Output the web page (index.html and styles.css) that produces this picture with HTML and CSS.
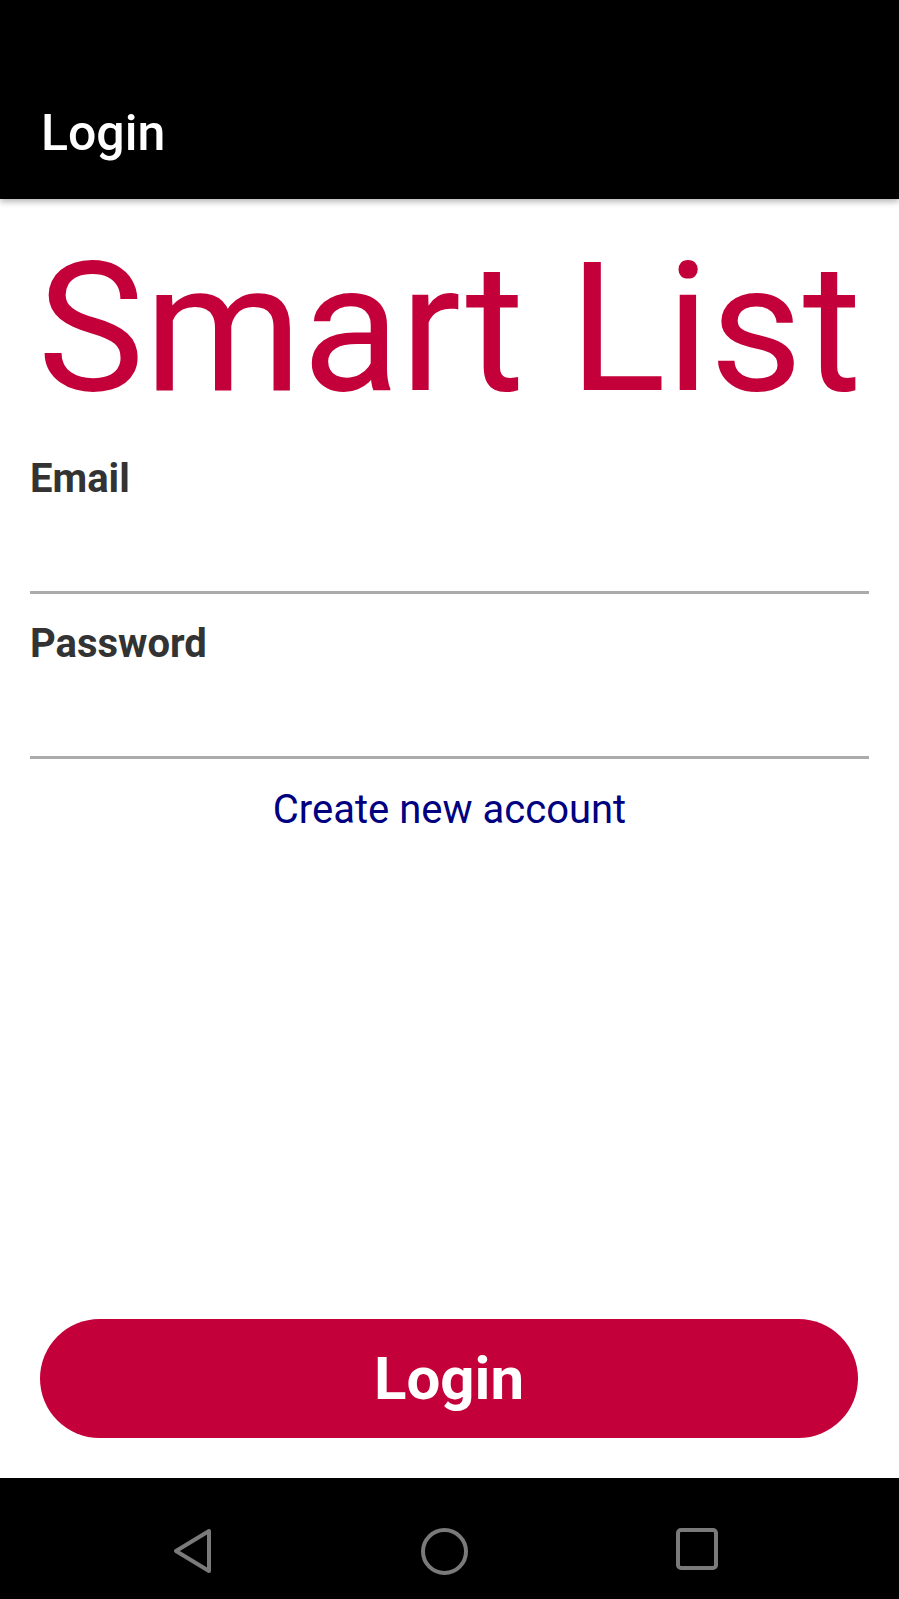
FILE: index.html
```html
<!DOCTYPE html>
<html lang="en">
<head>
<meta charset="utf-8">
<title>Login</title>
<link rel="stylesheet" href="styles.css">
</head>
<body>
<div class="screen">
  <header class="appbar">
    <h1 class="appbar-title">Login</h1>
  </header>
  <main class="content">
    <div class="brand">Smart List</div>
    <form class="form">
      <label class="field">
        <span class="field-label">Email</span>
        <span class="field-input"></span>
      </label>
      <label class="field field-second">
        <span class="field-label">Password</span>
        <span class="field-input"></span>
      </label>
      <a class="link" href="#">Create new account</a>
    </form>
    <div class="spacer"></div>
    <button class="btn" type="button">Login</button>
  </main>
  <nav class="navbar">
    <svg class="nav-icon" width="40" height="46" viewBox="0 0 40 46">
      <path d="M36 3 L36 43 L3 23 Z" fill="none" stroke="#7a7a7a" stroke-width="4" stroke-linejoin="round"/>
    </svg>
    <svg class="nav-icon" width="47" height="47" viewBox="0 0 47 47">
      <circle cx="23.5" cy="23.5" r="21.5" fill="none" stroke="#7a7a7a" stroke-width="4"/>
    </svg>
    <svg class="nav-icon" width="42" height="42" viewBox="0 0 42 42">
      <rect x="2" y="2" width="38" height="38" rx="3" fill="none" stroke="#7a7a7a" stroke-width="4"/>
    </svg>
  </nav>
</div>
</body>
</html>
```

FILE: styles.css
```css
* { box-sizing: border-box; }
html, body { margin: 0; padding: 0; background: #fff; }
body { font-family: Roboto, "Noto Sans", sans-serif; }

.screen {
  width: 899px;
  height: 1599px;
  display: flex;
  flex-direction: column;
  overflow: hidden;
}

.appbar {
  height: 199px;
  flex: none;
  background: #000;
  display: flex;
  align-items: flex-end;
  padding: 0 0 41px 41px;
  box-shadow: 0 3px 6px rgba(0,0,0,0.28);
  position: relative;
  z-index: 1;
}
.appbar-title {
  margin: 0;
  color: #fff;
  font-size: 50px;
  line-height: 50px;
  font-weight: 500;
}

.content {
  flex: 1;
  display: flex;
  flex-direction: column;
}

.brand {
  margin-top: 40px;
  text-align: center;
  color: #c4003a;
  font-size: 180px;
  line-height: 180px;
  font-weight: 400;
  letter-spacing: 0;
}

.form {
  margin: 40px 30px 0 30px;
  display: flex;
  flex-direction: column;
}
.field { display: flex; flex-direction: column; }
.field-second { margin-top: 30px; }
.field-label {
  color: #333;
  font-size: 40px;
  line-height: 40px;
  font-weight: 700;
}
.field-input {
  height: 95px;
  border-bottom: 3px solid #ababab;
}
.link {
  margin-top: 31px;
  align-self: center;
  color: #000080;
  font-size: 40px;
  line-height: 40px;
  text-decoration: none;
}

.spacer { flex: 1; }

.btn {
  margin: 0 41px 40px 40px;
  height: 119px;
  border: none;
  border-radius: 60px;
  background: #c4003a;
  color: #fff;
  font-family: Roboto, "Noto Sans", sans-serif;
  font-size: 60px;
  font-weight: 700;
  line-height: 60px;
  padding: 0;
}

.navbar {
  height: 121px;
  flex: none;
  background: #000;
  display: flex;
  align-items: flex-start;
  justify-content: center;
  gap: 208px;
  padding: 50px 9px 0 0;
}
.nav-icon { display: block; }
```
